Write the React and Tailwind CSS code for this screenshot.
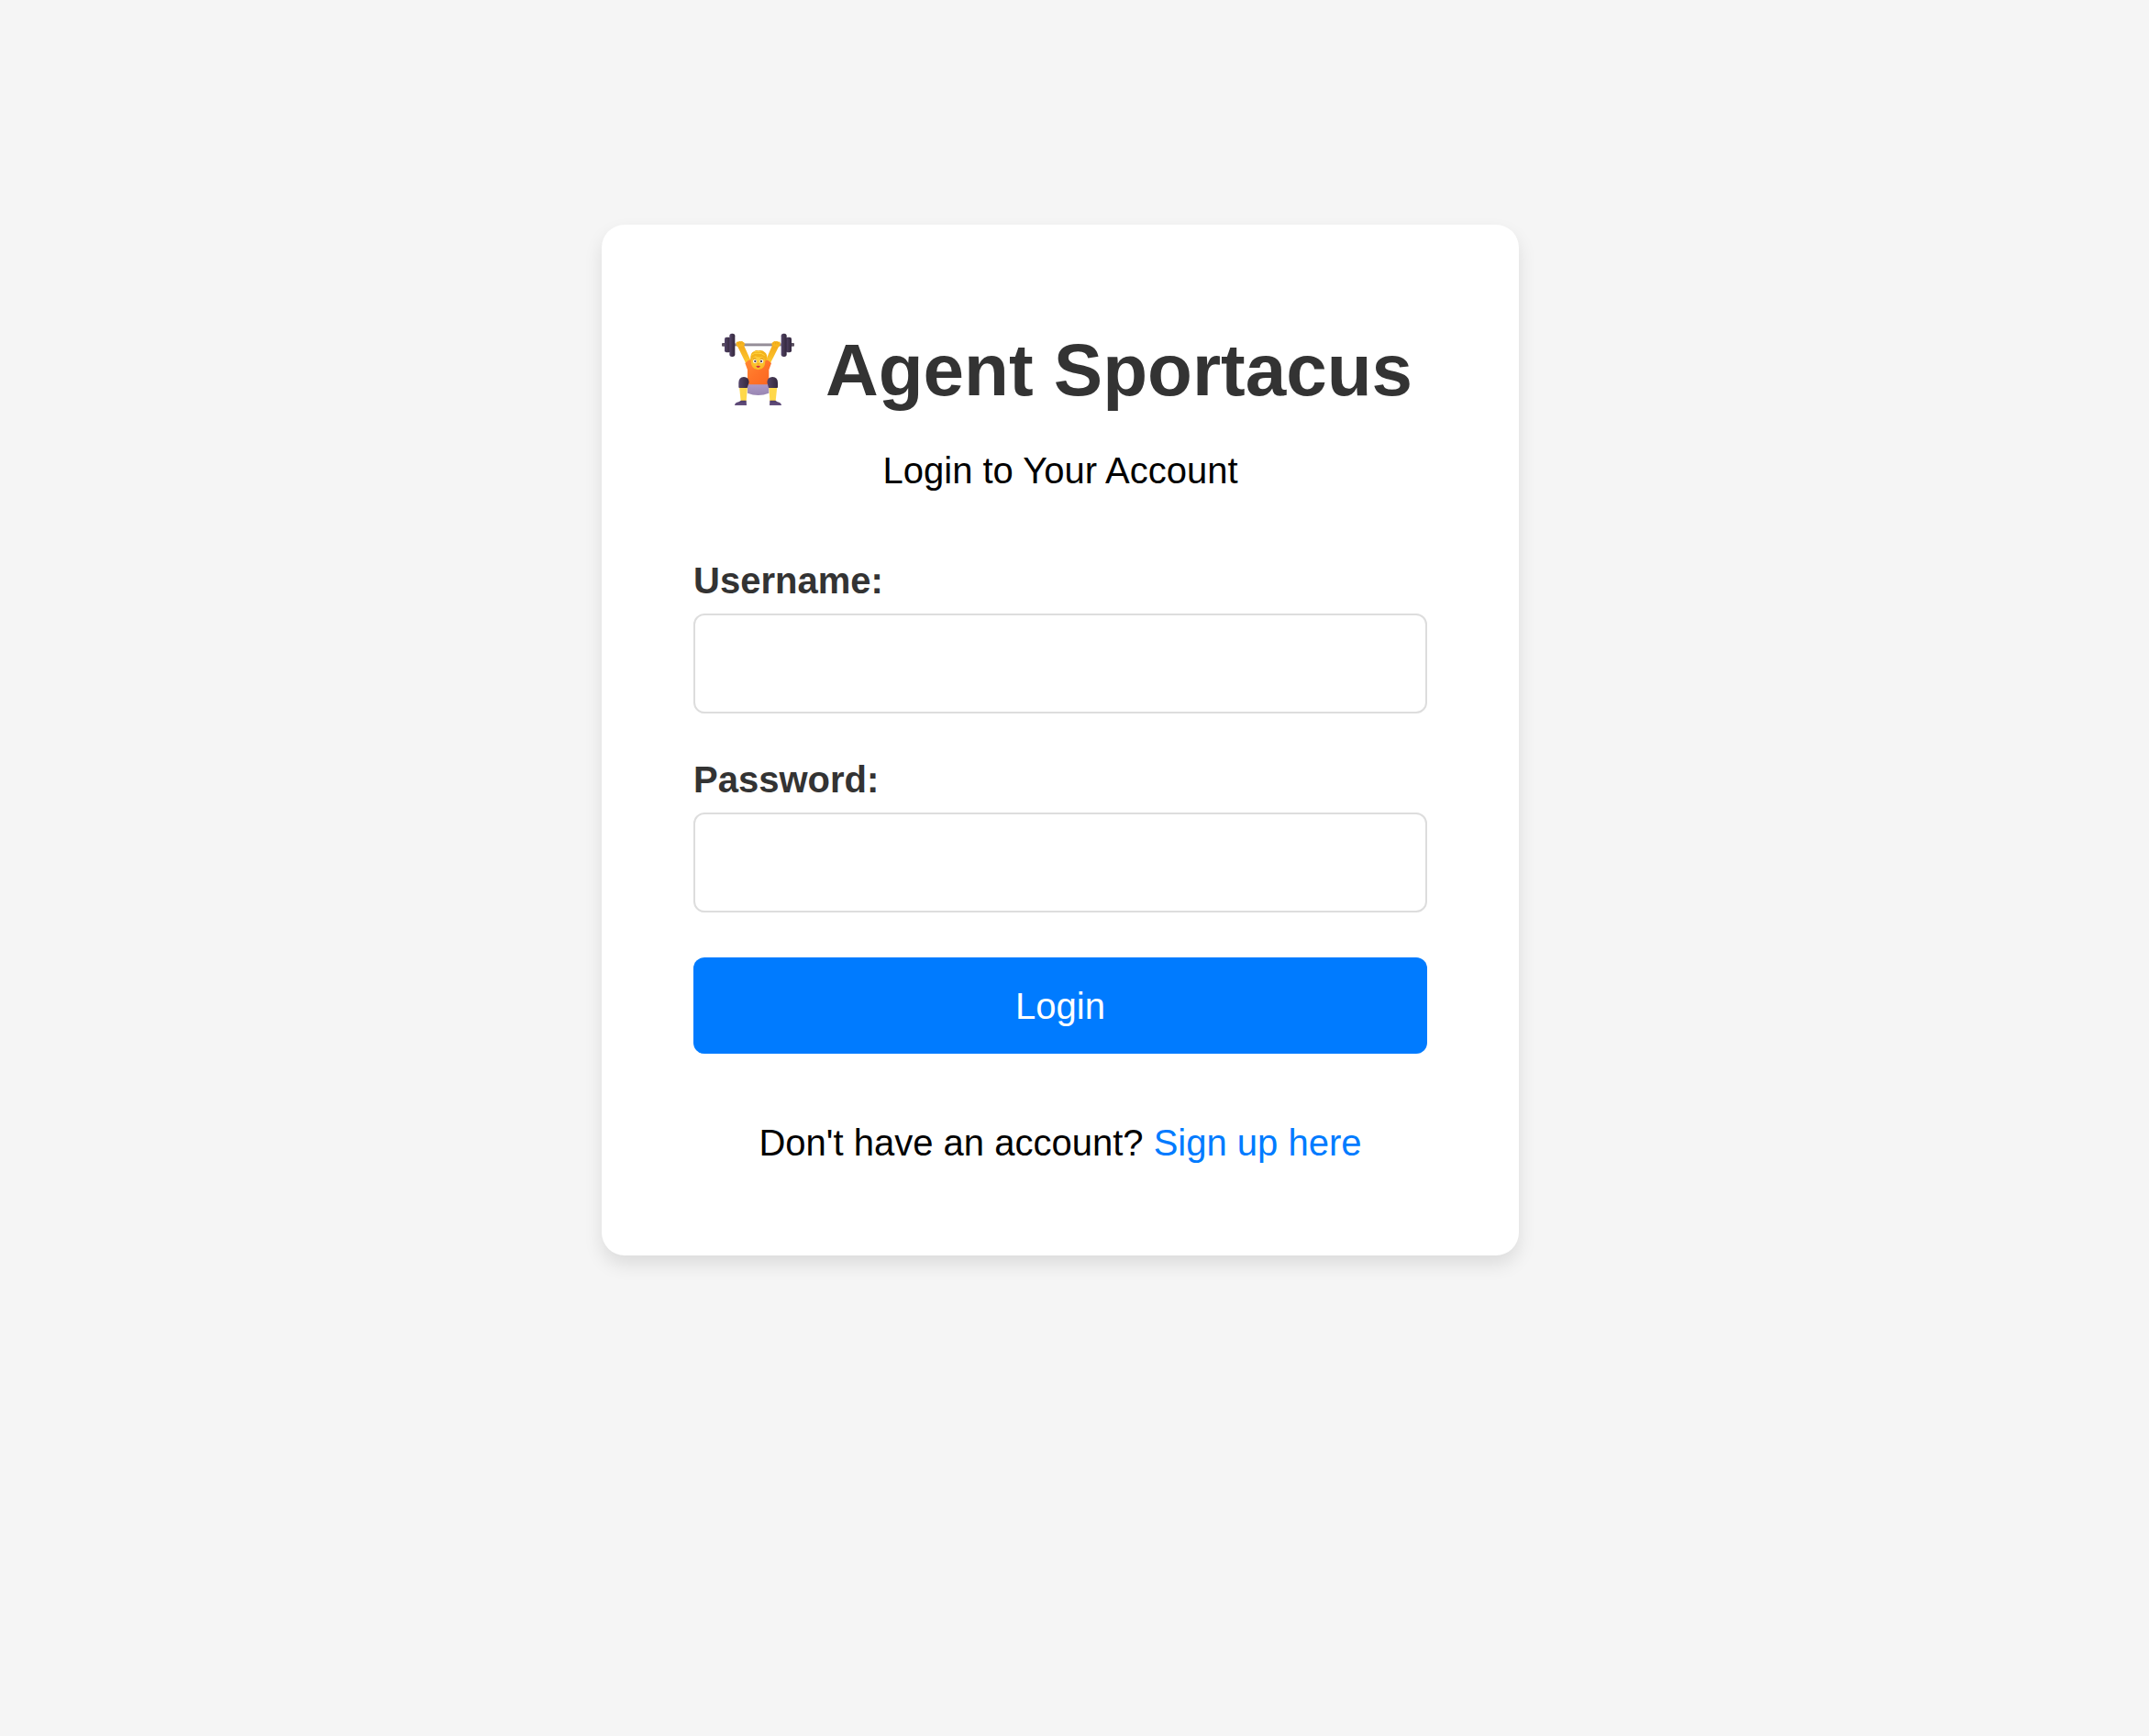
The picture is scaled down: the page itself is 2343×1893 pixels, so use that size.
import React, { useState } from 'react'

const LifterIcon = () => (
  <svg
    viewBox="6 30 300 264"
    className="w-[100px] h-[88px] shrink-0"
    aria-hidden="true"
  >
    <defs>
      <linearGradient id="shirt" x1="0" y1="0" x2="1" y2="1">
        <stop offset="0" stopColor="#ff8a35" />
        <stop offset="0.5" stopColor="#ff7428" />
        <stop offset="1" stopColor="#fb6520" />
      </linearGradient>
      <linearGradient id="plate" x1="0" y1="0" x2="1" y2="0">
        <stop offset="0" stopColor="#54446a" />
        <stop offset="0.5" stopColor="#43364f" />
        <stop offset="1" stopColor="#33273f" />
      </linearGradient>
      <linearGradient id="bar" x1="0" y1="0" x2="0" y2="1">
        <stop offset="0" stopColor="#a9a3ab" />
        <stop offset="1" stopColor="#827b86" />
      </linearGradient>
      <linearGradient id="arm" x1="0" y1="0" x2="0" y2="1">
        <stop offset="0" stopColor="#f3a81c" />
        <stop offset="1" stopColor="#ffcb2e" />
      </linearGradient>
      <linearGradient id="shorts" x1="0" y1="0" x2="0" y2="1">
        <stop offset="0" stopColor="#b09dca" />
        <stop offset="1" stopColor="#9885b2" />
      </linearGradient>
      <linearGradient id="shoe" x1="0" y1="0" x2="0" y2="1">
        <stop offset="0" stopColor="#4c3a66" />
        <stop offset="1" stopColor="#66517f" />
      </linearGradient>
      <radialGradient id="face" cx="0.5" cy="0.4" r="0.6">
        <stop offset="0" stopColor="#ffd23e" />
        <stop offset="1" stopColor="#f9b724" />
      </radialGradient>
    </defs>

    {/* barbell */}
    <rect x="51" y="72" width="14" height="11" rx="3" fill="#5a5060" />
    <rect x="274" y="72" width="14" height="11" rx="3" fill="#5a5060" />
    <rect x="90" y="73" width="160" height="9" fill="url(#bar)" />
    <rect x="60" y="53" width="20" height="50" rx="6" fill="url(#plate)" />
    <rect x="76" y="41" width="18" height="76" rx="8" fill="url(#plate)" />
    <rect x="260" y="53" width="19" height="50" rx="6" fill="url(#plate)" />
    <rect x="245" y="41" width="18" height="76" rx="8" fill="url(#plate)" />

    {/* arms and hands */}
    <path d="M100 78 L122 77 L145 128 L131 142 Z" fill="url(#arm)" />
    <path d="M240 78 L217 77 L195 128 L208 142 Z" fill="url(#arm)" />
    <path d="M98 71 Q99 67 104 68 Q108 64 113 67 Q118 65 121 69 Q126 70 126 77 Q124 83 117 83 L102 85 Q96 80 98 71 Z" fill="#f8b61f" />
    <path d="M242 71 Q241 67 236 68 Q232 64 227 67 Q222 65 219 69 Q214 70 214 77 Q216 83 223 83 L238 85 Q244 80 242 71 Z" fill="#f8b61f" />
    <path d="M106 69 V76 M113 68 V76 M120 70 V76 M220 70 V76 M227 68 V76 M234 69 V76" stroke="#de9518" strokeWidth="1.5" />

    {/* body */}
    <path d="M135 202 H205 V236 Q188 243 170 243 Q152 243 135 236 Z" fill="url(#shorts)" />
    <path d="M127 138 Q135 128 149 125 H191 Q205 128 213 138 L205 160 V208 H135 V160 Z" fill="url(#shirt)" />

    {/* legs */}
    <path d="M108 214 H135 L131 262 H113 Z" fill="#ffd84a" />
    <path d="M205 214 H232 L227 262 H208 Z" fill="#ffd84a" />
    <path d="M106 217 V202 Q106 184 123 183 Q139 184 140 200 L134 219 H109 Q106 219 106 217 Z" fill="url(#plate)" />
    <path d="M234 217 V202 Q234 184 217 183 Q200 184 199 200 L204 219 H231 Q234 219 234 217 Z" fill="url(#plate)" />
    <path d="M93 276 Q94 267 106 265 L114 260 H131 L132 276 Z" fill="url(#shoe)" />
    <path d="M246 276 Q245 267 233 265 L226 260 H208 L207 276 Z" fill="url(#shoe)" />

    {/* head */}
    <path d="M146 125 Q144 158 170 160 Q195 158 193 125 Q188 105 169 105 Q151 106 146 125 Z" fill="url(#face)" />
    <path d="M145 130 Q142 103 157 99 Q162 95 170 97 Q184 94 191 102 Q201 109 198 123 Q197 131 193 132 Q192 119 181 116 Q171 120 161 114 Q151 118 149 126 Q148 131 145 130 Z" fill="#f4b31b" />
    <path d="M149 111 Q158 103 169 106 Q181 104 190 112 M158 101 Q168 100 177 101" stroke="#ffd33b" strokeWidth="3" strokeLinecap="round" fill="none" />
    <ellipse cx="159" cy="132" rx="6" ry="6" fill="#fff" />
    <ellipse cx="181" cy="132" rx="6" ry="6" fill="#fff" />
    <circle cx="160" cy="132" r="3.5" fill="#55405c" />
    <circle cx="180" cy="132" r="3.5" fill="#55405c" />
    <path d="M153 124 Q158 121 163 124 M177 124 Q182 121 187 124" stroke="#c77c1a" strokeWidth="2" fill="none" />
    <path d="M167 140 Q170 142 173 140" stroke="#ed8b20" strokeWidth="3" fill="none" />
    <path d="M163 147 Q170 146 177 147 Q175 153 170 153 Q165 153 163 147 Z" fill="#cf2f3c" />
  </svg>
)

const Field = ({ id, label, type, value, onChange }) => (
  <div className="mb-[49px]">
    <label htmlFor={id} className="block mb-[13px] font-bold text-[#333]">
      {label}
    </label>
    <input
      id={id}
      name={id}
      type={type}
      value={value}
      onChange={(e) => onChange(e.target.value)}
      className="block w-full h-[109px] px-[25px] border-2 border-[#ddd] rounded-[12px] bg-white focus:outline-none focus:border-[#007bff]"
      required
    />
  </div>
)

export default function App() {
  const [username, setUsername] = useState('')
  const [password, setPassword] = useState('')

  const handleLogin = (e) => {
    e.preventDefault()
  }

  return (
    <div className="min-h-screen bg-[#f5f5f5] pt-[245px] pr-[31px] font-['Liberation_Sans',Arial,sans-serif] text-[40px] leading-[46px] text-black">
      <main className="mx-auto w-full max-w-[1000px] p-[100px] bg-white rounded-[25px] shadow-[0_10px_20px_rgba(0,0,0,0.1)]">
        <h1 className="flex items-center justify-center gap-[28px] mb-[27px] text-[80px] leading-[118px] font-bold text-[#333] whitespace-nowrap">
          <LifterIcon />
          Agent Sportacus
        </h1>
        <p className="mb-[74px] text-center">Login to Your Account</p>

        <form onSubmit={handleLogin}>
          <Field
            id="username"
            label="Username:"
            type="text"
            value={username}
            onChange={setUsername}
          />
          <Field
            id="password"
            label="Password:"
            type="password"
            value={password}
            onChange={setPassword}
          />
          <button
            type="submit"
            className="block w-full h-[105px] rounded-[12px] bg-[#007bff] text-white cursor-pointer hover:bg-[#0056b3]"
          >
            Login
          </button>
        </form>

        <p className="mt-[74px] text-center">
          Don't have an account?{' '}
          <a href="/signup" className="text-[#007bff] hover:underline">
            Sign up here
          </a>
        </p>
      </main>
    </div>
  )
}
